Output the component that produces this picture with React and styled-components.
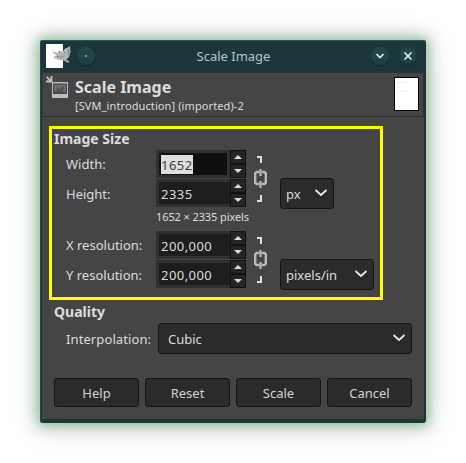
import React from "react";
import styled, { createGlobalStyle } from "styled-components";

const GlobalStyle = createGlobalStyle`
  * { box-sizing: border-box; }
  body {
    margin: 0;
    background: #fff;
    font-family: "Noto Sans", sans-serif;
    font-size: 13px;
    color: #dcdcdc;
  }
`;

const Desktop = styled.main`
  width: 466px;
  height: 463px;
  padding: 40px;
  overflow: hidden;
`;

const Window = styled.section`
  width: 386px;
  height: 383px;
  padding: 0 2px 4px;
  border-radius: 3px;
  background: #1b373b;
  box-shadow: inset 0 1px #22585b, inset 1px 0 #1f494d, 0 0 12px 3px rgba(82, 150, 82, 0.5),
    0 2px 26px 5px rgba(60, 90, 75, 0.22);
`;

const TitleBar = styled.header`
  display: grid;
  grid-template-columns: 26px 18px 1fr 18px 18px;
  column-gap: 10px;
  align-items: center;
  height: 32px;
  padding: 0 7px 0 4px;
`;

const Title = styled.h1`
  margin: 0;
  padding-right: 4px;
  text-align: center;
  font-size: 13px;
  font-weight: 400;
  line-height: 20px;
  color: #b7c4c6;
`;

const RoundButton = styled.button`
  display: grid;
  place-items: center;
  width: 18px;
  height: 18px;
  padding: 0;
  margin-left: ${(p) => p.$shift || 0}px;
  border: 0;
  border-radius: 50%;
  background: linear-gradient(#22494b, #1b3f43);
  box-shadow: 0 1px 2px rgba(0, 0, 0, 0.4);
`;

const Content = styled.div`
  height: 347px;
  background: #454545;
`;

const Banner = styled.div`
  display: flex;
  height: 45px;
  padding: 3px 4px 0 3px;
  border: 1px solid #303030;
  border-left-color: #393939;
`;

const BannerText = styled.div`
  flex: 1;
  padding-left: 6px;
`;

const Heading = styled.h2`
  margin: 0;
  font-size: 16px;
  line-height: 22px;
  font-weight: 700;
`;

const Subtitle = styled.div`
  font-size: 11px;
  line-height: 16px;
  letter-spacing: 0.1px;
`;

const Thumbnail = styled.div`
  width: 25px;
  height: 34px;
  margin-top: 1px;
  padding: 3px 1px;
  border: 1px solid #000;
  background: #fff;
`;

const Highlight = styled.section`
  width: 334px;
  height: 174px;
  margin: 9px 0 0 7px;
  padding: 0 2px;
  border: 3px solid #ffff00;
`;

const SectionTitle = styled.h3`
  margin: 0;
  height: 21px;
  font-size: 14px;
  line-height: 20px;
  font-weight: 700;
`;

const Group = styled.div`
  display: flex;
  height: ${(p) => p.$height}px;
  padding-left: 12px;
`;

const Labels = styled.div`
  display: flex;
  flex-direction: column;
  gap: 2px;
  width: 90px;
`;

const Label = styled.label`
  height: 28px;
  line-height: 28px;
  white-space: nowrap;
`;

const WideLabel = styled(Label)`
  flex: 0 0 92px;
  height: 31px;
  line-height: 32px;
  letter-spacing: 0.1px;
`;

const Fields = styled.div`
  display: flex;
  flex-direction: column;
  gap: 1px;
  width: 90px;
`;

const SpinBox = styled.div`
  display: grid;
  grid-template-columns: 1fr 16px;
  height: 28px;
  background: #303030;
`;

const Entry = styled.div`
  height: 22px;
  margin: 3px ${(p) => (p.$active ? 3 : 0)}px 3px 3px;
  padding: 1px 2px;
  line-height: 22px;
  letter-spacing: 0.45px;
  background: ${(p) => (p.$active ? "#101010" : "#1e1e1e")};
`;

const Selection = styled.span`
  display: inline-block;
  height: 19px;
  line-height: 21px;
  color: #3c3c3c;
  background: #dedede;
`;

const Steppers = styled.div`
  display: grid;
  grid-template-rows: 14px 14px;
`;

const Stepper = styled.button`
  display: grid;
  place-items: center;
  padding: 0;
  border: 1px solid #121212;
  background: #252525;
`;

const Hint = styled.div`
  padding-top: 1px;
  font-size: 11px;
  line-height: 15px;
  letter-spacing: -0.1px;
  white-space: nowrap;
`;

const Link = styled.svg`
  flex: none;
  width: 16px;
  height: 57px;
  margin-left: 7px;
`;

const Select = styled.button`
  display: flex;
  flex: none;
  align-items: center;
  justify-content: space-between;
  width: ${(p) => p.$width}px;
  height: 31px;
  margin-top: ${(p) => p.$top || 0}px;
  margin-left: ${(p) => p.$left || 0}px;
  padding: 0 5px 0 ${(p) => p.$inset || 5}px;
  border: 1px solid #151515;
  border-radius: 3px;
  background: #2b2b2b;
  color: #dcdcdc;
  font: inherit;

  svg {
    margin-bottom: 2px;
  }
`;

const Quality = styled.section`
  padding: 2px 12px 0;
`;

const Actions = styled.footer`
  display: grid;
  grid-template-columns: repeat(4, 85px);
  gap: 6px;
  padding: 24px 12px 0;
`;

const Action = styled.button`
  height: 29px;
  padding: 0;
  border: 1px solid #151515;
  border-radius: 3px;
  background: #2b2b2b;
  color: #d2d2d2;
  font: inherit;
`;

const AppIcon = () => (
  <svg width="26" height="26" viewBox="0 0 26 26">
    <path fill="#fff" d="M0 1h17v24H0z" />
    <path
      fill="#b0b4b2"
      d="M5 7l3 2 3 .5 2-2 4 1 2-3 3-1 2-1.500.5 6-1.500 5-3 3 3 1v1.500h-2l-3-2-5-.5-5-2 .5-2 3-.5-3-1.500z"
    />
    <circle cx="13" cy="9.500" r="1.500" fill="#d0d0d0" />
    <circle cx="18" cy="9.500" r="1.300" fill="#c8c8c8" />
    <path d="M13 9h1v1h-1zM18 9h1v1h-1z" fill="#555" />
    <path d="M10 13l5 1.500 4-2" fill="none" stroke="#8a8d8c" />
    <path d="M22 6l1 3-1 3" fill="none" stroke="#71807f" />
  </svg>
);

const ScaleIcon = () => (
  <svg width="23" height="23" viewBox="0 0 23 23">
    <path fill="#bcbcbc" d="M6 6h16v16H6z" />
    <path fill="#444" d="M7 7.500h14V18H7z" />
    <path fill="#6c6c6c" d="M8 8.500h12V17H8z" />
    <path
      fill="#505050"
      d="M8 15l3-1v-2h2v1l1-1v2h1v-2h1v-1h2v2h-1v2l2 1v1H8z"
    />
    <path d="M.8.8l4.500 4.500M5.500 0v5.500H0" fill="none" stroke="#c2c2c2" strokeWidth="1.800" />
  </svg>
);

const Arrow = ({ down }) => (
  <svg width="8" height="4" viewBox="0 0 8 4">
    <path fill="#d8d8d8" d={down ? "M0 0h8L4 4z" : "M4 0l4 4H0z"} />
  </svg>
);

const Chevron = () => (
  <svg width="14" height="8" viewBox="0 0 14 8">
    <path d="M1.500 1l5.500 5 5.500-5" fill="none" stroke="#ededed" strokeWidth="1.700" />
  </svg>
);

const ChainLink = () => (
  <Link viewBox="0 0 16 57">
    <path
      d="M4 7h4V13M4 51h4V45"
      fill="none"
      stroke="#dedede"
      strokeWidth="2"
    />
    <path
      d="M6.500 22H3.500L2.200 23.300v9.400L3.500 34h3M8.500 22h3l1.300 1.300v9.400L11.500 34h-3"
      fill="none"
      stroke="#b8b8b8"
      strokeWidth="2.400"
    />
    <path d="M7.500 19v7M7.500 31v7" stroke="#b8b8b8" strokeWidth="2.200" />
  </Link>
);

const Spin = ({ value, selected }) => (
  <SpinBox>
    <Entry $active={selected}>{selected ? <Selection>{value}</Selection> : value}</Entry>
    <Steppers>
      <Stepper aria-label="Increase"><Arrow /></Stepper>
      <Stepper aria-label="Decrease"><Arrow down /></Stepper>
    </Steppers>
  </SpinBox>
);

export default function App() {
  return (
    <>
      <GlobalStyle />
      <Desktop>
        <Window>
          <TitleBar>
            <AppIcon />
            <RoundButton $shift={-5} aria-label="Pin">
              <svg width="2" height="2"><circle cx="1" cy="1" r="1" fill="#9fb9b9" /></svg>
            </RoundButton>
            <Title>Scale Image</Title>
            <RoundButton aria-label="Shade">
              <svg width="10" height="8" viewBox="0 0 10 8">
                <path d="M1.500 2L5 5.500 8.500 2" fill="none" stroke="#e4eeee" strokeWidth="1.700" />
              </svg>
            </RoundButton>
            <RoundButton aria-label="Close">
              <svg width="10" height="10" viewBox="0 0 10 10">
                <path d="M1.500 1.500l7 7M8.500 1.500l-7 7" stroke="#e4eeee" strokeWidth="1.700" />
              </svg>
            </RoundButton>
          </TitleBar>
          <Content>
            <Banner>
              <ScaleIcon />
              <BannerText>
                <Heading>Scale Image</Heading>
                <Subtitle>[SVM_introduction] (imported)-2</Subtitle>
              </BannerText>
              <Thumbnail>
                <svg width="21" height="14" viewBox="0 0 21 14">
                  <path d="M1 1.500h11M1 6.500h4M1 10.500h9" stroke="#f0f0f0" />
                </svg>
              </Thumbnail>
            </Banner>
            <Highlight>
              <SectionTitle>Image Size</SectionTitle>
              <Group $height={81}>
                <Labels>
                  <Label>Width:</Label>
                  <Label>Height:</Label>
                </Labels>
                <Fields>
                  <Spin value="1652" selected />
                  <Spin value="2335" />
                  <Hint>1652 × 2335 pixels</Hint>
                </Fields>
                <ChainLink />
                <Select $width={54} $top={28} $left={11}>px<Chevron /></Select>
              </Group>
              <Group $height={57}>
                <Labels>
                  <Label>X resolution:</Label>
                  <Label>Y resolution:</Label>
                </Labels>
                <Fields>
                  <Spin value="200,000" />
                  <Spin value="200,000" />
                </Fields>
                <ChainLink />
                <Select $width={94} $top={28} $left={11}>pixels/in<Chevron /></Select>
              </Group>
            </Highlight>
            <Quality>
              <SectionTitle>Quality</SectionTitle>
              <Group $height={31}>
                <WideLabel>Interpolation:</WideLabel>
                <Select $width={254} $inset={9}>Cubic<Chevron /></Select>
              </Group>
            </Quality>
            <Actions>
              <Action>Help</Action>
              <Action>Reset</Action>
              <Action>Scale</Action>
              <Action>Cancel</Action>
            </Actions>
          </Content>
        </Window>
      </Desktop>
    </>
  );
}
